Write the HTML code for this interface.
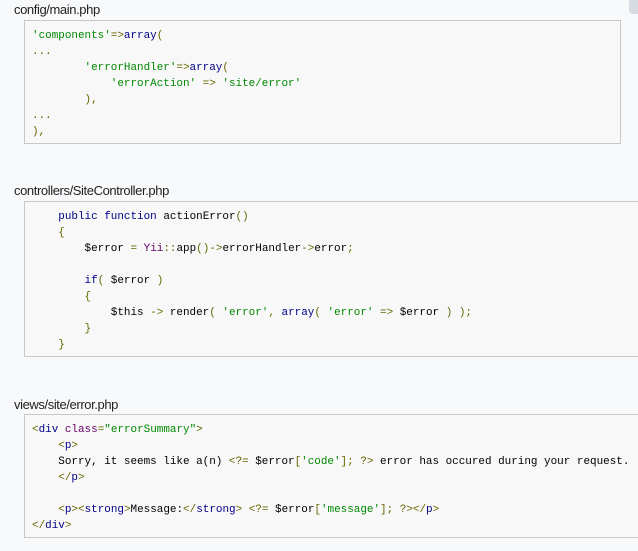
<!DOCTYPE html>
<html><head><meta charset="utf-8"><style>
html,body{margin:0;padding:0}
body{width:638px;height:551px;background:#f8f9fb;position:relative;overflow:hidden;font-family:"Liberation Sans",sans-serif}
.lbl{position:absolute;left:14px;font-size:13px;color:#222;letter-spacing:-0.4px;line-height:16px}
.box{position:absolute;left:24px;background:#f8f8f8;border:1px solid #c8c8c8;box-sizing:border-box}
pre{margin:0;position:absolute;left:7px;font-family:"Liberation Mono",monospace;font-size:10.95px;line-height:16px;color:#000}
.k{color:#000088}.s{color:#008800}.p{color:#666600}.t{color:#660066}
</style></head><body>
<div style="position:absolute;left:629px;top:-4px;width:14px;height:18px;background:#d7dbe2;border-radius:4px"></div>
<div class="lbl" style="top:2px">config/main.php</div>
<div class="box" style="top:20px;width:597px;height:124px">
<pre style="top:7px"><span class="s">'components'</span><span class="p">=&gt;</span><span class="k">array</span><span class="p">(</span>
<span class="p">...</span>
        <span class="s">'errorHandler'</span><span class="p">=&gt;</span><span class="k">array</span><span class="p">(</span>
            <span class="s">'errorAction'</span> <span class="p">=&gt;</span> <span class="s">'site/error'</span>
        <span class="p">),</span>
<span class="p">...</span>
<span class="p">),</span></pre></div>
<div class="lbl" style="top:183px">controllers/SiteController.php</div>
<div class="box" style="top:201px;width:640px;height:156px">
<pre style="top:7px">    <span class="k">public</span> <span class="k">function</span> actionError<span class="p">()</span>
    <span class="p">{</span>
        $error <span class="p">=</span> <span class="t">Yii</span><span class="p">::</span>app<span class="p">()-&gt;</span>errorHandler<span class="p">-&gt;</span>error<span class="p">;</span>

        <span class="k">if</span><span class="p">(</span> $error <span class="p">)</span>
        <span class="p">{</span>
            $this <span class="p">-&gt;</span> render<span class="p">(</span> <span class="s">'error'</span><span class="p">,</span> <span class="k">array</span><span class="p">(</span> <span class="s">'error'</span> <span class="p">=&gt;</span> $error <span class="p">)</span> <span class="p">);</span>
        <span class="p">}</span>
    <span class="p">}</span></pre></div>
<div class="lbl" style="top:397px">views/site/error.php</div>
<div class="box" style="top:414px;width:640px;height:124px">
<pre style="top:7px"><span class="p">&lt;</span><span class="k">div</span> <span class="t">class</span><span class="p">=</span><span class="s">"errorSummary"</span><span class="p">&gt;</span>
    <span class="p">&lt;</span><span class="k">p</span><span class="p">&gt;</span>
    Sorry, it seems like a(n) <span class="p">&lt;?=</span> $error<span class="p">[</span><span class="s">'code'</span><span class="p">];</span> <span class="p">?&gt;</span> error has occured during your request.
    <span class="p">&lt;/</span><span class="k">p</span><span class="p">&gt;</span>

    <span class="p">&lt;</span><span class="k">p</span><span class="p">&gt;&lt;</span><span class="k">strong</span><span class="p">&gt;</span>Message:<span class="p">&lt;/</span><span class="k">strong</span><span class="p">&gt;</span> <span class="p">&lt;?=</span> $error<span class="p">[</span><span class="s">'message'</span><span class="p">];</span> <span class="p">?&gt;&lt;/</span><span class="k">p</span><span class="p">&gt;</span>
<span class="p">&lt;/</span><span class="k">div</span><span class="p">&gt;</span></pre></div>
</body></html>
